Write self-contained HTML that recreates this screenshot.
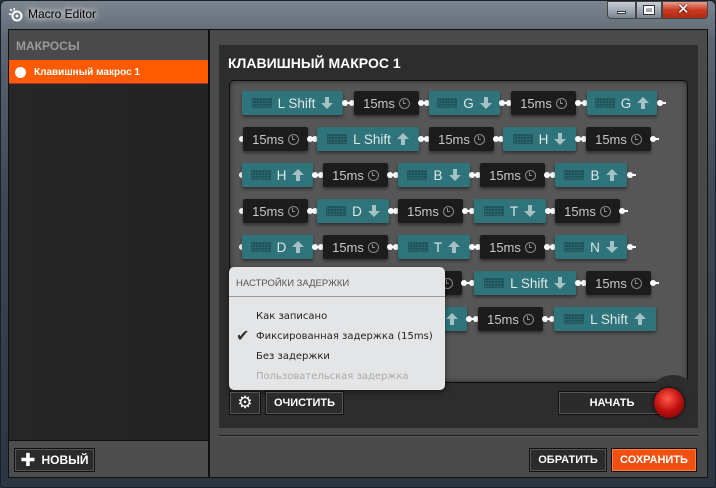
<!DOCTYPE html>
<html><head><meta charset="utf-8"><style>
*{box-sizing:border-box;margin:0;padding:0}
body{width:716px;height:488px;overflow:hidden;background:#2a3440;font-family:"Liberation Sans","DejaVu Sans",sans-serif;position:relative}
.a{position:absolute}
.frame{left:0;top:0;width:716px;height:488px;background:linear-gradient(180deg,#7d8690 0%,#5c6670 8%,#3d4854 40%,#2c3642 100%);border-radius:6px 6px 4px 4px;border:1px solid #1a1f26}
.k{position:absolute;height:24px;background:#2f737b;border-radius:2px;color:#dde8e8;font-size:13.5px;display:flex;align-items:center;justify-content:center;gap:6px;box-shadow:0 2px 3px rgba(0,0,0,.45)}
.kb{width:20px;height:10px;background:#1e5258;border:1px solid #22585e;background-image:repeating-linear-gradient(90deg,#28656c 0 1px,transparent 1px 3px),repeating-linear-gradient(0deg,#28656c 0 1px,transparent 1px 3px)}
.dn,.up{display:inline-block;width:12px;height:14px;position:relative}
.dn:before,.up:before{content:"";position:absolute;left:4px;width:4px;height:7px;background:#a4c2c4}
.dn:before{top:1px}.up:before{bottom:1px}
.dn:after,.up:after{content:"";position:absolute;left:0;width:0;height:0;border-left:6px solid transparent;border-right:6px solid transparent}
.dn:after{top:7px;border-top:6px solid #a4c2c4}
.up:after{top:1px;border-bottom:6px solid #a4c2c4}
.d{position:absolute;height:24px;width:65px;background:#1c1c1c;border-radius:2px;color:#c8c8c8;font-size:13px;display:flex;align-items:center;justify-content:center;gap:4px;box-shadow:0 2px 3px rgba(0,0,0,.45)}
.ck{width:11px;height:11px;border:1.6px solid #8a8a8a;border-radius:50%;position:relative}
.ck:after{content:"";position:absolute;left:3px;top:1px;width:2px;height:3px;border-left:1.4px solid #8a8a8a;border-bottom:1.4px solid #8a8a8a}
.c{position:absolute;height:2px;background:#fff}
.c:before,.c:after{content:"";position:absolute;top:-2px;width:6px;height:6px;border-radius:50%;background:#fff}
.c:before{left:-1px}.c:after{right:-1px}
.t:after{display:none}
.btn{position:absolute;background:#2b2b2b;border:1px solid #111;box-shadow:inset 0 0 0 1px #555;color:#fff;font-weight:bold;font-size:11px;display:flex;align-items:center;justify-content:center}
</style></head><body>
<div class="a frame"></div>
<svg class="a" style="left:8px;top:7px" width="16" height="16" viewBox="0 0 16 16"><circle cx="9" cy="9" r="4.5" fill="none" stroke="#fff" stroke-width="2"/><circle cx="9" cy="9" r="1.5" fill="#fff"/><g stroke="#fff" stroke-width="1.5"><line x1="2" y1="2" x2="4" y2="4"/><line x1="1" y1="7" x2="3.5" y2="7.5"/><line x1="6" y1="1" x2="6.5" y2="3.5"/></g></svg>
<div class="a" style="left:28px;top:7px;font-size:12px;color:#000;text-shadow:0 0 6px #fff,0 0 8px #fff">Macro Editor</div>
<div class="a" style="left:607px;top:1px;width:29px;height:18px;border:1px solid #444;border-radius:0 0 0 4px;background:linear-gradient(#c8d0d8,#7a8590)"></div>
<div class="a" style="left:617px;top:11px;width:9px;height:3px;background:#fff;border:1px solid #333"></div>
<div class="a" style="left:636px;top:1px;width:26px;height:18px;border:1px solid #444;background:linear-gradient(#c8d0d8,#7a8590)"></div>
<div class="a" style="left:644px;top:6px;width:10px;height:8px;border:2px solid #fff;outline:1px solid #333"></div>
<div class="a" style="left:662px;top:1px;width:46px;height:18px;border:1px solid #444;border-radius:0 0 4px 0;background:linear-gradient(#e8a090,#c83a20 50%,#b02a15)"></div>
<div class="a" style="left:677px;top:0px;color:#fff;font-weight:bold;font-size:15px;text-shadow:0 0 2px #000">✕</div>
<!-- left panel -->
<div class="a" style="left:8px;top:29px;width:201px;height:449px;background:#262626;border:1px solid #111"></div>
<div class="a" style="left:9px;top:30px;width:199px;height:30px;background:#4a4a4a"></div>
<div class="a" style="left:16px;top:39px;color:#9a9a9a;font-weight:bold;font-size:12px">МАКРОСЫ</div>
<div class="a" style="left:9px;top:60px;width:199px;height:24px;background:#ff5a00;border-bottom:1px solid #a33"></div>
<div class="a" style="left:15px;top:67px;width:11px;height:11px;border-radius:50%;background:#fff"></div>
<div class="a" style="left:34px;top:67px;color:#fff;font-weight:bold;font-size:10px">Клавишный макрос 1</div>
<div class="a" style="left:9px;top:84px;width:199px;height:356px;background:linear-gradient(90deg,#272727,#232323)"></div>
<div class="a" style="left:9px;top:440px;width:199px;height:37px;background:#4d4d4d;border-top:1px solid #111"></div>
<div class="btn" style="left:14px;top:448px;width:81px;height:24px;font-size:12px"><span style="font-size:18px;margin-right:6px">✚</span>НОВЫЙ</div>
<!-- right panel -->
<div class="a" style="left:209px;top:29px;width:499px;height:449px;background:#4a4a4a;border:1px solid #111"></div>
<div class="a" style="left:219px;top:45px;width:479px;height:383px;background:#2d2d2d"></div>
<div class="a" style="left:228px;top:55px;color:#fff;font-weight:bold;font-size:14px">КЛАВИШНЫЙ МАКРОС 1</div>
<div class="a" style="left:229px;top:80px;width:459px;height:303px;background:#565656;border:1px solid #0c0c0c;border-radius:5px;box-shadow:inset 0 0 6px rgba(0,0,0,.5)"></div>
<div class="a" style="left:219px;top:435px;width:479px;height:1px;background:#1a1a1a"></div>
<div class="a" style="left:219px;top:436px;width:479px;height:1px;background:#5a5a5a"></div>

<!-- row1 top 91 -->
<div class="k" style="left:242px;top:91px;width:101px"><span class="kb"></span>L Shift<i class="dn"></i></div>
<div class="c" style="left:343px;top:102px;width:11px"></div>
<div class="d" style="left:354px;top:91px">15ms<span class="ck"></span></div>
<div class="c" style="left:419px;top:102px;width:10px"></div>
<div class="k" style="left:429px;top:91px;width:71px"><span class="kb"></span>G<i class="dn"></i></div>
<div class="c" style="left:500px;top:102px;width:11px"></div>
<div class="d" style="left:511px;top:91px">15ms<span class="ck"></span></div>
<div class="c" style="left:576px;top:102px;width:11px"></div>
<div class="k" style="left:587px;top:91px;width:70px"><span class="kb"></span>G<i class="up"></i></div>
<div class="c t" style="left:658px;top:102px;width:8px"></div>
<!-- row2 top 127 -->
<div class="c t" style="left:240px;top:138px;width:4px"></div>
<div class="d" style="left:243px;top:127px">15ms<span class="ck"></span></div>
<div class="c" style="left:308px;top:138px;width:9px"></div>
<div class="k" style="left:317px;top:127px;width:102px"><span class="kb"></span>L Shift<i class="up"></i></div>
<div class="c" style="left:419px;top:138px;width:10px"></div>
<div class="d" style="left:429px;top:127px">15ms<span class="ck"></span></div>
<div class="c" style="left:494px;top:138px;width:9px"></div>
<div class="k" style="left:503px;top:127px;width:73px"><span class="kb"></span>H<i class="dn"></i></div>
<div class="c" style="left:576px;top:138px;width:10px"></div>
<div class="d" style="left:586px;top:127px">15ms<span class="ck"></span></div>
<div class="c t" style="left:651px;top:138px;width:8px"></div>
<!-- row3 top 163 -->
<div class="c t" style="left:240px;top:174px;width:4px"></div>
<div class="k" style="left:242px;top:163px;width:71px"><span class="kb"></span>H<i class="up"></i></div>
<div class="c" style="left:313px;top:174px;width:10px"></div>
<div class="d" style="left:323px;top:163px">15ms<span class="ck"></span></div>
<div class="c" style="left:388px;top:174px;width:10px"></div>
<div class="k" style="left:398px;top:163px;width:72px"><span class="kb"></span>B<i class="dn"></i></div>
<div class="c" style="left:470px;top:174px;width:10px"></div>
<div class="d" style="left:480px;top:163px">15ms<span class="ck"></span></div>
<div class="c" style="left:545px;top:174px;width:10px"></div>
<div class="k" style="left:555px;top:163px;width:72px"><span class="kb"></span>B<i class="up"></i></div>
<div class="c t" style="left:628px;top:174px;width:8px"></div>
<!-- row4 top 199 -->
<div class="c t" style="left:240px;top:210px;width:4px"></div>
<div class="d" style="left:243px;top:199px">15ms<span class="ck"></span></div>
<div class="c" style="left:308px;top:210px;width:9px"></div>
<div class="k" style="left:317px;top:199px;width:72px"><span class="kb"></span>D<i class="dn"></i></div>
<div class="c" style="left:389px;top:210px;width:9px"></div>
<div class="d" style="left:398px;top:199px">15ms<span class="ck"></span></div>
<div class="c" style="left:463px;top:210px;width:11px"></div>
<div class="k" style="left:474px;top:199px;width:72px"><span class="kb"></span>T<i class="dn"></i></div>
<div class="c" style="left:546px;top:210px;width:9px"></div>
<div class="d" style="left:555px;top:199px">15ms<span class="ck"></span></div>
<div class="c t" style="left:620px;top:210px;width:8px"></div>
<!-- row5 top 235 -->
<div class="c t" style="left:240px;top:246px;width:4px"></div>
<div class="k" style="left:242px;top:235px;width:71px"><span class="kb"></span>D<i class="up"></i></div>
<div class="c" style="left:313px;top:246px;width:10px"></div>
<div class="d" style="left:323px;top:235px">15ms<span class="ck"></span></div>
<div class="c" style="left:388px;top:246px;width:10px"></div>
<div class="k" style="left:398px;top:235px;width:72px"><span class="kb"></span>T<i class="up"></i></div>
<div class="c" style="left:470px;top:246px;width:10px"></div>
<div class="d" style="left:480px;top:235px">15ms<span class="ck"></span></div>
<div class="c" style="left:545px;top:246px;width:10px"></div>
<div class="k" style="left:555px;top:235px;width:72px"><span class="kb"></span>N<i class="dn"></i></div>
<div class="c t" style="left:628px;top:246px;width:8px"></div>
<!-- row6 top 271 -->
<div class="d" style="left:397px;top:271px">15ms<span class="ck"></span></div>
<div class="c" style="left:462px;top:282px;width:12px"></div>
<div class="k" style="left:474px;top:271px;width:102px"><span class="kb"></span>L Shift<i class="dn"></i></div>
<div class="c" style="left:576px;top:282px;width:10px"></div>
<div class="d" style="left:586px;top:271px">15ms<span class="ck"></span></div>
<div class="c t" style="left:651px;top:282px;width:8px"></div>
<!-- row7 top 307 -->
<div class="k" style="left:395px;top:307px;width:72px"><span class="kb"></span>N<i class="up"></i></div>
<div class="c" style="left:467px;top:318px;width:11px"></div>
<div class="d" style="left:478px;top:307px">15ms<span class="ck"></span></div>
<div class="c" style="left:543px;top:318px;width:11px"></div>
<div class="k" style="left:554px;top:307px;width:102px"><span class="kb"></span>L Shift<i class="up"></i></div>

<!-- popup -->
<div class="a" style="left:229px;top:267px;width:216px;height:123px;background:#e4e5e7;border-radius:5px;box-shadow:0 2px 6px rgba(0,0,0,.5)"></div>
<div class="a" style="left:236px;top:278px;font-size:9.5px;color:#555">НАСТРОЙКИ ЗАДЕРЖКИ</div>
<div class="a" style="left:229px;top:296px;width:216px;height:1px;background:#9a9a9a"></div>
<div class="a" style="left:256px;top:311px;font-size:10px;color:#222;font-family:'DejaVu Sans',sans-serif">Как записано</div>
<div class="a" style="left:236px;top:326px;font-size:16px;color:#333">✔</div>
<div class="a" style="left:256px;top:331px;font-size:10px;color:#222;font-family:'DejaVu Sans',sans-serif">Фиксированная задержка (15ms)</div>
<div class="a" style="left:256px;top:351px;font-size:10px;color:#222;font-family:'DejaVu Sans',sans-serif">Без задержки</div>
<div class="a" style="left:256px;top:371px;font-size:10px;color:#aaa;font-family:'DejaVu Sans',sans-serif">Пользовательская задержка</div>

<!-- bottom controls -->
<div class="btn" style="left:229px;top:391px;width:32px;height:24px;font-size:17px">⚙</div>
<div class="btn" style="left:265px;top:391px;width:79px;height:24px">ОЧИСТИТЬ</div>
<div class="a" style="left:648px;top:375px;width:50px;height:50px;border-radius:50%;background:#2d2d2d"></div>
<div class="btn" style="left:558px;top:391px;width:108px;height:24px">НАЧАТЬ</div>
<div class="a" style="left:654px;top:388px;width:30px;height:30px;border-radius:50%;background:radial-gradient(circle at 45% 35%,#ff5a4a,#c01010 50%,#6a0000);box-shadow:0 0 4px #000"></div>
<div class="btn" style="left:529px;top:448px;width:78px;height:24px">ОБРАТИТЬ</div>
<div class="btn" style="left:611px;top:448px;width:86px;height:24px;background:#f05010;box-shadow:inset 0 0 0 1px #ff8040">СОХРАНИТЬ</div>
</body></html>
